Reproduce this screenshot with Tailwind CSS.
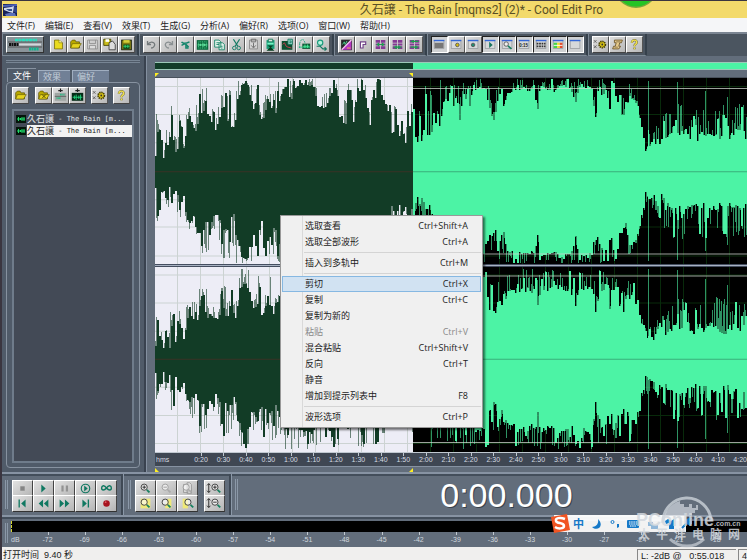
<!DOCTYPE html>
<html lang="zh-CN">
<head>
<meta charset="utf-8">
<title>久石譲 - The Rain [mqms2] (2)* - Cool Edit Pro</title>
<script src="https://cdn.jsdelivr.net/npm/@tailwindcss/browser@4"></script>
</head>
<body class="h-screen overflow-hidden bg-[#3b3640] font-['Open_Sans','Noto_Sans_CJK_SC',sans-serif] text-[9px] text-[#222]">
<div class="relative flex h-full flex-col overflow-hidden pt-px pl-[2px]">

  <header class="relative flex h-[17px] shrink-0 items-center overflow-hidden bg-[#f3da6b]">
    <svg class="ml-px h-3 w-3.5" viewBox="0 0 14 12"><rect width="14" height="12" fill="#182257"/><path d="M0 1L14 0V2L0 3Z" fill="#4c62b8"/><path d="M1 4L8 3L11 2L10 9L6 8L1 6Z" fill="#cfd9ee"/><path d="M3 5H9V7H6Z" fill="#33508c"/><path d="M2 10L6 9H12L13 12H3Z" fill="#5a70ba"/><path d="M11 2L14 3V9L11 8Z" fill="#2f448c"/></svg>
    <h1 class="ml-[46%] font-[Roboto,'Noto_Sans_CJK_SC',sans-serif] text-xs whitespace-nowrap text-[#594f25]">久石譲 - The Rain [mqms2] (2)* - Cool Edit Pro</h1>
    <svg class="absolute top-0 left-[616px] h-[7px] w-9" viewBox="0 0 36 7"><circle cx="18" cy="-15" r="22" fill="#7aa83a"/><circle cx="18" cy="-15.500" r="21" fill="#25c425"/></svg>
  </header>

  <nav id="menubar" class="flex h-[14px] shrink-0 items-center gap-[10px] bg-[#f5f6f8] pl-[5px] whitespace-nowrap"></nav>

  <div id="toolbar" class="flex h-6 shrink-0 border-t-2 border-[#7b8592] bg-[#4b5560]"></div>

  <main class="flex min-h-0 flex-1 bg-[#626d7b]">
    <aside class="flex w-[144px] shrink-0 flex-col border-r-2 border-[#39424f] bg-[#505b69] px-1 pb-1">
      <div class="mt-1 h-[3px] shrink-0 border-y border-[#788594]"></div>
      <div class="mt-[5px] flex h-[14px] shrink-0 items-end gap-[2px] pl-px">
        <button class="h-[14px] w-[29px] border-t border-l border-[#8792a0] bg-[#505b69] text-[9px] leading-[13px] text-white">文件</button>
        <button class="h-3 w-8 border-t border-l border-[#a0aec0] bg-[#718096] text-left text-[9px] leading-3 text-[#c0cad5]"><span class="pl-1">效果</span></button>
        <button class="h-3 w-[37px] border-t border-l border-[#a0aec0] bg-[#718096] text-left text-[9px] leading-3 text-[#c0cad5]"><span class="pl-1">偏好</span></button>
      </div>
      <section class="flex min-h-0 flex-1 flex-col rounded-sm border border-[#8792a0] px-[5px] pt-1 pb-1">
        <div id="filetools" class="flex h-[18px] shrink-0"></div>
        <div class="mt-1 min-h-0 flex-1 border-2 border-[#6f7c8b] bg-[#434a56] pt-[2px] pl-[2px] font-['DejaVu_Sans_Mono','Noto_Sans_CJK_JP',monospace] text-[7px]">
          <ul id="files"></ul>
        </div>
      </section>
    </aside>

    <section class="flex min-w-0 flex-1 flex-col border-l border-[#8490a0] pl-2">
      <div class="mt-[6px] flex h-2 shrink-0 border-t border-b border-[#9cc8b8]">
        <div class="w-[43.5%] bg-[#123c28]"></div><div class="flex-1 bg-[#4cf3a5]"></div>
      </div>
      <div class="flex h-2 shrink-0 items-end border-b border-[#48515c]">
        <div class="flex w-[43.5%] justify-between"><svg class="h-1 w-1" viewBox="0 0 4 4"><path d="M0 0H4L0 4Z" fill="#ffee20"/></svg><svg class="h-1 w-1" viewBox="0 0 4 4"><path d="M0 0H4V4Z" fill="#ffee20"/></svg></div>
      </div>
      <svg id="wave" class="block min-h-0 w-full flex-1" viewBox="0 0 592 373" preserveAspectRatio="none" role="img" aria-label="波形"></svg>
      <div class="relative h-[14px] shrink-0 border-t border-[#c0c8d0] bg-[#3f4753]">
        <div id="ruler" class="flex h-full overflow-hidden font-['Liberation_Sans',sans-serif] text-[7px] leading-[13px] whitespace-nowrap text-[#d5dbe2]"></div>
      </div>
      <div class="flex h-[6px] shrink-0 items-start border-t border-[#8692a2] pt-px">
        <div class="flex w-[43.5%] justify-between"><svg class="h-1 w-1" viewBox="0 0 4 4"><path d="M0 0V4H4Z" fill="#ffee20"/></svg><svg class="h-1 w-1" viewBox="0 0 4 4"><path d="M4 0V4H0Z" fill="#ffee20"/></svg></div>
      </div>
    </section>
  </main>

  <section class="flex h-[45px] shrink-0 border-t-2 border-b-2 border-t-[#8793a3] border-b-[#8793a3] bg-[#626d7b]">
    <div class="flex border-r-2 border-[#3f4955] py-[6px] pr-1 pl-[3px] shadow-[inset_0_2px_0_#434e5b]">
      <div class="mr-1 w-[3px] border-x border-[#8b98a8]"></div>
      <div id="transport" class="grid grid-cols-5 grid-rows-2"></div>
    </div>
    <div class="flex border-r-2 border-l border-r-[#3f4955] border-l-[#8b98a8] py-[6px] pr-1 pl-1 shadow-[inset_0_2px_0_#434e5b]">
      <div class="mr-1 w-[3px] border-x border-[#8b98a8]"></div>
      <div id="zoomer" class="grid grid-cols-3 grid-rows-2"></div>
      <div id="vzoom" class="ml-[6px] grid grid-rows-2"></div>
    </div>
    <div class="flex min-w-0 flex-1 border-l border-[#8b98a8] py-[5px] pl-[3px] shadow-[inset_0_2px_0_#434e5b]">
      <div class="w-[3px] border-x border-[#8b98a8]"></div>
      <output class="ml-[39.5%] font-['Liberation_Sans',sans-serif] text-[34px] leading-[32px] text-white [text-shadow:1px_1px_0_#39424d]">0:00.000</output>
    </div>
  </section>

  <section class="flex h-[30px] shrink-0 border-t-2 border-[#434e5b] bg-[#626d7b] pl-[3px]">
    <div class="my-1 mr-[3px] w-[3px] border-x border-[#8b98a8]"></div>
    <div class="min-w-0 flex-1 pt-[2px]">
      <div class="h-[11px] border-l border-dashed border-[#d8d830] bg-black"></div>
      <div id="levels" class="flex font-['Liberation_Sans',sans-serif] text-[7px] leading-[10px] text-[#d0d7de]"></div>
    </div>
  </section>

  <footer class="flex h-[13px] shrink-0 items-start justify-between overflow-hidden bg-[#f0efee] pl-px font-['Liberation_Sans','Noto_Sans_CJK_SC',sans-serif] text-[9px] whitespace-pre">
    <span class="leading-[17px]">打开时间  9.40 秒</span>
    <span class="mt-[2px] flex gap-[2px] leading-3"><span class="w-[99px] border-t border-l border-[#888] pl-[3px]">L: -2dB @   0:55.018</span><span class="w-[9px] border-t border-l border-[#888] pl-[3px]">4</span></span>
  </footer>

  <div id="context" role="menu" class="absolute top-[215px] left-[280px] w-[203px] border border-[#999] bg-[#f0f0f0] bg-[linear-gradient(90deg,transparent_21px,#d9d9d9_21px,#d9d9d9_22px,transparent_22px)] px-px py-[2px] shadow-[2px_2px_2px_#0008]"></div>

  <div class="absolute top-[515px] left-[554px] flex h-[17px] w-[132px] items-center gap-[7px] bg-white/95 text-[#1679c8]">
    <svg class="-ml-1 h-5 w-5 shrink-0" viewBox="0 0 20 20"><path d="M1 3L17 0L20 16L4 19Z" fill="#f15422"/><path d="M15 5C10 3 5 4 6 7C7 10 14 8 14 12C14 15 8 15 5 13" fill="none" stroke="#fff" stroke-width="2.500"/></svg>
    <span class="-ml-1 text-[11px] leading-4 font-bold">中</span>
    <svg class="h-3 w-3 shrink-0" viewBox="0 0 12 12"><path d="M7 1C8 6 5 9 1 9C6 14 14 8 7 1Z" fill="#1679c8"/></svg>
    <svg class="h-3 w-2.5 shrink-0" viewBox="0 0 10 12"><circle cx="2.500" cy="4" r="1.500" fill="none" stroke="#1679c8"/><path d="M7 6H9V9L7 10Z" fill="#1679c8"/></svg>
    <svg class="h-3 w-3 shrink-0" viewBox="0 0 12 12"><rect y="2" width="12" height="8" rx="1" fill="#1679c8"/><path d="M2 4H10M2 6H10M3 8H9" stroke="#fff" stroke-dasharray="1.500 .700"/></svg>
    <svg class="h-3 w-3 shrink-0" viewBox="0 0 12 12"><path d="M2 4H7V7H12V11H5V8H2Z" fill="#91b7d9"/></svg>
    <svg class="h-3 w-3 shrink-0" viewBox="0 0 12 12"><path d="M0 3L3 1L6 3L9 1V11H4V5L1 6Z" fill="#1679c8"/></svg>
    <svg class="-ml-1 h-3 w-3 shrink-0" viewBox="0 0 12 12"><path d="M2 10L7 5M7 5C6 2 8 1 10 1L8 3L10 5L12 3C12 6 9 7 7 5" fill="none" stroke="#1679c8" stroke-width="2"/></svg>
  </div>

  <div class="pointer-events-none absolute top-[496px] left-[636px] h-[54px] w-[104px] font-['Liberation_Sans','Noto_Sans_CJK_SC',sans-serif] text-[#d3d8de]/85">
    <svg class="absolute top-0 left-6 h-[54px] w-[54px]" viewBox="0 0 54 54"><path d="M3 27A24 24 0 0 1 51 25" fill="none" stroke="#ccd2d9" stroke-opacity=".8" stroke-width="3"/><path d="M4 20C8 12 13 7 20 5V8H24V11H29V8H32V12H36V9H38V14H35V17H32V20H4Z" fill="#ccd2d9" fill-opacity=".75"/><path d="M10 43A24 24 0 0 0 44 43" fill="none" stroke="#ccd2d9" stroke-opacity=".7" stroke-width="3"/></svg>
    <div class="absolute top-[14px] left-0 flex items-baseline text-[18px] leading-5 font-bold">PConline<span class="text-[7px]">.com.cn</span></div>
    <div class="absolute top-[32px] left-[2px] flex w-[102px] justify-between text-[12px] leading-[14px] font-bold"><span>太</span><span>平</span><span>洋</span><span>电</span><span>脑</span><span>网</span></div>
  </div>
</div>

<script>
const $ = id => document.getElementById(id);

$('menubar').innerHTML = ['文件(F)','编辑(E)','查看(V)','效果(T)','生成(G)','分析(A)','偏好(R)','选项(O)','窗口(W)','帮助(H)']
  .map(t => `<button class="leading-[13px]">${t}</button>`).join('');

const folder = '<path d="M3 5L5 3H8L9 5H13V12H3Z" fill="#b8a800" stroke="#4d4500" stroke-width=".7"/><path d="M5 7H15L12 12H3Z" fill="#e5d31f" stroke="#5d5400" stroke-width=".7"/>';
const lens = (x, y, c = '#333') => `<circle cx="${x}" cy="${y}" r="3.500" fill="#ffffff99" stroke="${c}"/><path d="M${x+3} ${y+3}L${x+6} ${y+6}" stroke="#168060" stroke-width="2"/>`;
const win = inner => `<rect x="2.500" y="3.500" width="11" height="9" fill="#d6d8da" stroke="#8a8d92" stroke-width=".7"/><path d="M2 3.500H14" stroke="#3468d8" stroke-width="1.600"/>${inner}`;
const blocks = d => `<path d="M3 3H8V6H3ZM9 3H14V6H9ZM3 7H8V9H3ZM9 7H14V9H9ZM3 10H8V13H3ZM9 10H14V13H9Z" fill="#843994"/><path d="${d}" fill="none" stroke="#18a04c" stroke-width="1.400"/>`;
const gear = '<path d="M1 3L4 6M4 3L1 6M1 9L4 12M4 9L1 12" stroke="#444" stroke-width=".8"/><circle cx="10.500" cy="8" r="3.500" fill="#d4bf16" stroke="#464000" stroke-dasharray="1.500 .8" stroke-width="2"/><circle cx="10.500" cy="8" r="2.300" fill="#d4bf16"/><circle cx="10.500" cy="8" r="1" fill="#333"/>';
const help = '<path d="M5.500 6C5.500 2 11.500 2 11 6C10.500 8 8.500 7 8.500 10M8.500 11.500V13.500" fill="none" stroke="#6c6940" stroke-width="2.600"/><path d="M5.500 6C5.500 2 11.500 2 11 6C10.500 8 8.500 7 8.500 10M8.500 11.500V13.500" fill="none" stroke="#efdf4a" stroke-width="1.600"/>';
const icons = {
  new: '<path d="M4 3H9L13 6V13H4Z" fill="#eadb20" stroke="#6d6300" stroke-width=".8"/><path d="M9 3V6H13" fill="#fff8a0" stroke="#6d6300" stroke-width=".6"/>',
  open: folder,
  save: '<path d="M3 3H14V13H3ZM5 3V7H12V3M5 13V9H12V13" fill="#ddd" stroke="#8b8b8b"/>',
  saveas: '<path d="M2 2H10V9H2Z" fill="#cabd1b" stroke="#444400"/><path d="M4 2H8V5H4Z" fill="#fff"/><path d="M8 6L12 4L15 8V14H8Z" fill="#ddd" stroke="#333" stroke-width=".9"/>',
  saveall: '<rect x="3" y="3" width="11" height="11" fill="#817c12" stroke="#151d0c"/><path d="M5 3H12V6H5Z" fill="#d5cf39"/><path d="M5 8H12V13H5Z" fill="#0c4b20"/><path d="M5 10H12M7 8.500V12M10 8.500V12" stroke="#35d672"/>',
  undo: '<path d="M4 4V8H8M4 8C8 3 13 6 12 9C11 12 9 12 8 12" fill="none" stroke="#747a7c" stroke-width="1.500"/>',
  redo: '<path d="M13 4V8H9M13 8C9 3 4 6 5 9C6 12 8 12 9 12" fill="none" stroke="#8a9092" stroke-width="1.500"/>',
  repeat: '<path d="M4 5C6 8 11 6 13 5M8 7L4 9M8 7L12 11M9 8V12H12" fill="none" stroke="#15856c" stroke-width="1.700"/>',
  select: '<rect x="2" y="3" width="13" height="11" fill="#0b693d"/><path d="M4 5H13V12H4Z" fill="none" stroke="#59e29c" stroke-dasharray="1 1"/><path d="M3 8.500H14M6 7V10M9 6V11M11 7V10" stroke="#6ff7ad"/>',
  copy: '<path d="M3 3H8L10 5V11H3ZM8 6H12L14 8V14H8Z" fill="#e7f4ed" stroke="#178467"/><path d="M5 6H8M5 8H8M10 10H12M10 12H12" stroke="#178467"/>',
  cut: '<path d="M5 2L10 10M12 2L7 10" stroke="#157b64" stroke-width="1.400"/><circle cx="6" cy="12" r="2" fill="none" stroke="#157b64"/><circle cx="11" cy="12" r="2" fill="none" stroke="#157b64"/>',
  paste: '<path d="M4 3H13V13H4Z" fill="#d5d5d5" stroke="#888"/><path d="M6 2H11V5H6ZM8.500 6V11M6 9L8.500 12L11 9" fill="none" stroke="#666"/>',
  pastenew: '<path d="M4 3H13V13H4Z" fill="#179d76"/><path d="M6 2H11V5H6Z" fill="#d7e9df" stroke="#147154"/><path d="M5 6H12V8H5Z" fill="#78f1c3"/><path d="M5 9H12L9 11L13 15H4L8 11Z" fill="#063d20"/>',
  mix: '<path d="M2 4H14V14H2Z" fill="#0b5030"/><path d="M3 8L5 6L7 10L9 11L13 12" fill="none" stroke="#d03b50"/><path d="M9 2H14V8H9Z" fill="#9cddcc" stroke="#15735c"/><path d="M10.500 4H12.500V6H10.500" fill="none" stroke="#15735c"/>',
  crop: '<path d="M6 7H15V13H6Z" fill="#115b38"/><path d="M2 11H15" stroke="#28c983"/><path d="M7 10H14M9 8V12M12 8V12" stroke="#4bf29c"/><path d="M3 7C4 1 8 1 9 6M3 7V12" fill="none" stroke="#1da47c" stroke-dasharray="2 1"/>',
  convert: '<circle cx="7" cy="6" r="3" fill="#b4f2dc" stroke="#1a9b7c" stroke-width="1.300"/><path d="M3 10H7L10 13H14M12 11L14 13L12 15" fill="none" stroke="#13775f" stroke-width="1.300"/>',
  spectral: '<rect x="3" y="3" width="11" height="11" fill="#26262a" stroke="#242424"/><path d="M3 14L14 3V14Z" fill="#b834c4"/><path d="M3 14L14 3" stroke="#f4c1ef" stroke-width="1.500"/><path d="M4 8L6 5L7 8L9 4" fill="none" stroke="#4bd68c"/><path d="M9 12H13" stroke="#f0c03a"/>',
  cue: '<path d="M5 12V5H11V8H8V12Z" fill="#fff" stroke="#704288" stroke-width="1.300"/>',
  trackA: blocks('M4 8H13M6 6V10M11 6V10'), trackB: blocks('M4 11H13M7 9V13M10 9V13'), trackC: blocks('M4 4.500H13M4 11H13M7 3V6M10 9V13'),
  w1: win('<path d="M3 6H13V12H3Z" fill="#777"/>'), w2: win('<circle cx="9.500" cy="8.500" r="2" fill="#d7bd10" stroke="#555"/>'), w3: win('<circle cx="8" cy="8.500" r="2" fill="#218b70" stroke="#555"/>'), w4: win('<path d="M7 5L11 8.500L7 12Z" fill="#17735d"/>'),
  w5: win('<circle cx="7" cy="7.500" r="2.500" fill="#eee" stroke="#555"/><path d="M9 9.500L13 13" stroke="#168060" stroke-width="1.800"/>'), w6: win('<text x="2.500" y="11" font-family="Liberation Sans" font-weight="bold" font-size="5" fill="#222">0:15</text>'), w7: win('<path d="M3 7H13M3 10H13" stroke="#333" stroke-width="2" stroke-dasharray="2 .8"/>'),
  w8: win('<path d="M3 6H7V12H3Z" fill="#46d54a"/><path d="M7 6H10V12H7Z" fill="#eee12c"/><path d="M10 6H13V12H10Z" fill="#e44c2a"/><path d="M3 9H13" stroke="#fff"/>'), w9: win(''),
  gear, help,
  script: '<path d="M5 3H14L13 6H11L10 10H12L10 13H3L4 10H6L7 6H5Z" fill="#e6cb8c" stroke="#6e572a"/><path d="M7 5H12M5 11H9" stroke="#89744c"/>',
  close: folder + '<path d="M7 7L11 11M11 7L7 11" stroke="#4a4300"/>',
  insert: '<path d="M2 5H15V14H2Z" fill="#9fa6a3"/><path d="M8.500 0V4M6 2.500H11" stroke="#222" stroke-width="1.300"/><path d="M8 7H13M4 11H9" stroke="#24bd84" stroke-width="2" stroke-dasharray="1 .5"/><path d="M2 9H15" stroke="#333" stroke-width=".6"/>',
  edit: '<path d="M2 5H15V14H2Z" fill="#052b17"/><path d="M8.500 0V4M6 2.500H11" stroke="#222" stroke-width="1.300"/><path d="M3 10H14M5 8V12M7 7V13M10 8V12M12 7V13" stroke="#24da80"/>',
  stop: '<path d="M8 6H13V11H8Z" fill="#858585"/>', play: '<path d="M8 4L13 8.500L8 13Z" fill="#107861"/>',
  pause: '<path d="M7 5H9.500V12H7ZM12 5H14.500V12H12Z" fill="#929292"/>',
  playloop: '<circle cx="10.500" cy="8.500" r="4.800" fill="none" stroke="#107861" stroke-width="1.300"/><path d="M9 5L13 8.500L9 12Z" fill="#107861"/>',
  loop: '<path d="M10.500 8C8 4 5 5 5 8C5 11 8 11 10.500 8C13 4 16 5 16 8C16 11 13 11 10.500 8Z" fill="none" stroke="#107861" stroke-width="1.600"/>',
  start: '<path d="M6 4H7.500V13H6ZM14 4V13L9 8.500Z" fill="#107861"/>', rew: '<path d="M10 4V13L5 8.500ZM16 4V13L11 8.500Z" fill="#107861"/>',
  fwd: '<path d="M5 4V13L10 8.500ZM11 4V13L16 8.500Z" fill="#107861"/>', end: '<path d="M7 4V13L12 8.500ZM13 4H14.500V13H13Z" fill="#107861"/>',
  rec: '<circle cx="10.500" cy="8.500" r="3.700" fill="#a71420"/><circle cx="9.500" cy="7" r="1" fill="#df5960"/>',
  zin: lens(9,7) + '<path d="M7 7H11M9 5V9" stroke="#222"/>', zout: lens(9,7,'#999').replace('#168060','#aaa') + '<path d="M7 7H11" stroke="#999"/>',
  zfull: '<path d="M6 4H11V13H6ZM10 2H13L15 4V14H10Z" fill="#ddd" stroke="#999"/>' + lens(9,7,'#999').replace('#168060','#aaa'),
  zsel: '<path d="M5 3H16V14H5Z" fill="#efe978"/>' + lens(9,7), zleft: '<path d="M12 3H16V14H9V11Z" fill="#efe978"/>' + lens(9,7), zright: '<path d="M5 3H11V14H5Z" fill="#efe978"/>' + lens(11,7),
  vin: '<path d="M4 3V13M2 5L4 3L6 5M2 11L4 13L6 11" fill="none" stroke="#222"/>' + lens(11,7) + '<path d="M9 7H13M11 5V9" stroke="#222"/>',
  vout: '<path d="M4 3V13M2 5L4 3L6 5M2 11L4 13L6 11" fill="none" stroke="#222"/>' + lens(11,7) + '<path d="M9 7H13" stroke="#222"/>'
};
const small = n => `<button aria-label="${n}" class="h-[17px] w-[17px] shrink-0 border border-t-white border-r-[#555] border-b-[#444] border-l-white bg-linear-to-br from-[#dedede] to-[#b8b8b8]"><svg class="h-[15px] w-[15px]" viewBox="0 0 17 16">${icons[n]}</svg></button>`;
const sunk = n => `<button aria-label="${n}" class="h-[17px] w-[17px] shrink-0 border border-t-[#222] border-r-white border-b-white border-l-[#222] bg-[#cfd1d3]"><svg class="h-[15px] w-[15px]" viewBox="0 0 17 16">${icons[n]}</svg></button>`;
const large = n => `<button aria-label="${n}" class="h-[17px] w-[21px] border border-t-white border-r-[#444] border-b-[#333] border-l-white bg-linear-to-br from-[#e2e2e2] to-[#b5b5b5]"><svg class="h-[15px] w-[19px]" viewBox="0 0 21 17">${icons[n]}</svg></button>`;

const multi = `<button aria-label="多轨" class="mr-[6px] h-[17px] w-[38px] border border-t-white border-r-[#333] border-b-[#333] border-l-white bg-[#8b949a]"><svg class="h-[15px] w-9" viewBox="0 0 36 15"><path d="M1 5H35M1 10H35" stroke="#555"/><path d="M8 3H30" stroke="#28dfbd" stroke-width="2.500" stroke-dasharray="3 .5"/><path d="M2 7.500H12" stroke="#111" stroke-width="3" stroke-dasharray="2 .5"/><path d="M12 7.500H34" stroke="#d4d8db" stroke-width="2"/><path d="M22 12H32" stroke="#10b38d" stroke-width="3" stroke-dasharray="2 .5"/></svg></button>`;
const groups = [
  [multi, ...['new','open','save','saveas','saveall'].map(small)],
  ['undo','redo','repeat','select','copy','cut','paste','pastenew','mix','crop','convert'].map(small),
  ['spectral','cue','trackA','trackB','trackC'].map(small),
  ['w1','w2','w3','w4','w5','w6','w7','w8','w9'].map((n, i) => i === 1 || i === 2 ? small(n) : sunk(n)),
  ['gear','script','help'].map(small)
];
$('toolbar').innerHTML = groups.map(g => `<div class="flex items-start border-r-2 border-b border-l border-r-[#35404b] border-b-[#7b8794] border-l-[#7b8794] pt-[2px] pr-[2px] pl-[3px]">${g.join('')}</div>`).join('');
$('filetools').innerHTML = small('open') + '<span class="w-[6px]"></span>' + small('close') + small('insert') + small('edit') + '<span class="w-[5px]"></span>' + small('gear') + '<span class="w-[5px]"></span>' + small('help');
$('transport').innerHTML = ['stop','play','pause','playloop','loop','start','rew','fwd','end','rec'].map(large).join('');
$('zoomer').innerHTML = ['zin','zout','zfull','zsel','zleft','zright'].map(large).join('');
$('vzoom').innerHTML = ['vin','vout'].map(large).join('');

const fileIcon = '<svg class="h-2.5 w-2.5 shrink-0" viewBox="0 0 10 10"><rect y="1" width="10" height="8" fill="#04150a"/><path d="M1 5H9M2.500 3V7M4.500 4V6M6 3V7M8 3V7" stroke="#21db6a"/></svg>';
$('files').innerHTML = ['text-[#e2e6ea]', 'bg-[#f2f2f2] text-[#222]']
  .map(c => `<li class="flex h-3 items-center gap-px whitespace-pre">${fileIcon}<span class="${c} flex h-3 flex-1 items-center leading-3"><span class="text-[9px]">久石譲</span> - The Rain [m...</span></li>`).join('');

const times = [];
for (let s = 20; s <= 250; s += 10) times.push(Math.floor(s / 60) + ':' + String(s % 60).padStart(2, '0'));
$('ruler').innerHTML = '<span class="min-w-0 flex-[1.5] pl-px">hms</span>' +
  times.map(t => `<span class="relative min-w-0 flex-1 text-center before:absolute before:top-0 before:left-1/2 before:h-[3px] before:w-px before:bg-[#c0c8d0]">${t}</span>`).join('') +
  '<span class="min-w-0 flex-[.6] overflow-hidden pl-1">4:20</span>';

let lv = '<span class="relative w-[18px] shrink-0 pt-[3px]">dB</span>';
for (let d = -72; d <= -18; d += 3) lv += `<span class="relative min-w-0 flex-1 pt-[3px] text-center before:absolute before:top-0 before:left-1/2 before:h-[3px] before:w-px before:bg-[#c0c8d0]">${d}</span>`;
$('levels').innerHTML = lv + '<span class="w-[13px] shrink-0"></span>';

const sep = '<div role="separator" class="my-[2px] ml-[22px] h-px bg-[#d4d4d4]"></div>';
$('context').innerHTML = [['选取查看','Ctrl+Shift+A'],['选取全部波形','Ctrl+A'],0,['插入到多轨中','Ctrl+M'],0,['剪切','Ctrl+X'],['复制','Ctrl+C'],['复制为新的',''],['粘贴','Ctrl+V'],['混合粘贴','Ctrl+Shift+V'],['反向','Ctrl+T'],['静音',''],['增加到提示列表中','F8'],0,['波形选项','Ctrl+P']]
  .map(m => !m ? sep : `<button role="menuitem" class="flex h-4 w-full items-center justify-between border pr-3 pl-[22px] leading-[14px] ${m[0] === '剪切' ? 'border-[#86b8e2] bg-[#d1e2f2]' : 'border-transparent'} ${m[0] === '粘贴' ? 'text-[#8a8a8a]' : ''}"><span>${m[0]}</span><span>${m[1]}</span></button>`).join('');

// Waveform envelope: [x, inner edge, outer edge] measured down from the top of a track
const env = [[0,78,55],[1,50,36],[3,62,45],[8,80,72],[11,62,48],[14,80,50],[16,62,28],[19,78,45],[21,80,55],[24,56,35],[29,76,60],[31,44,32],[34,44,28],[37,48,20],[40,58,30],[44,38,5],[48,40,12],[52,44,8],[57,46,30],[61,54,40],[67,35,2],[72,44,6],[79,54,0],[82,28,0],[86,8,0],[91,4,0],[97,33,3],[102,30,6],[107,48,12],[112,24,5],[118,44,10],[125,20,0],[130,10,0],[134,30,0],[139,12,0],[150,8,0],[157,8,0],[163,34,6],[170,34,12],[175,18,0],[182,22,0],[184,46,8],[190,48,20],[192,12,2],[196,22,10],[199,56,20],[202,12,0],[208,18,0],[211,24,6],[215,58,40],[217,24,0],[225,14,0],[229,28,14],[234,42,18],[237,72,34],[239,42,20],[243,66,36],[246,48,24],[250,66,34],[252,36,20],[256,60,16],[257,60,15],[261,72,34],[264,67,26],[267,70,8],[270,68,5],[276,58,2],[285,62,0],[288,24,0],[293,26,0],[296,42,8],[301,22,2],[304,50,10],[307,18,0],[314,34,0],[318,12,0],[328,12,0],[333,32,5],[339,46,20],[342,24,2],[348,34,8],[352,16,0],[365,12,0],[378,14,0],[382,32,2],[385,10,0],[399,14,0],[404,8,0],[415,12,0],[420,30,2],[423,10,0],[436,12,0],[440,44,12],[444,20,0],[450,16,0],[455,44,2],[458,14,0],[464,33,14],[470,44,20],[474,22,6],[478,22,12],[482,30,20],[486,52,42],[490,74,56],[495,68,48],[499,76,54],[501,58,48],[506,76,40],[511,64,34],[515,63,34],[518,54,24],[522,60,18],[530,56,28],[536,66,38],[545,62,28],[550,64,24],[553,56,40],[561,62,20],[570,67,24],[575,60,28],[582,61,25],[592,62,28]];
let seed = 73;
const rnd = () => (seed = (seed * 16807) % 2147483647) / 2147483647;
const at = x => { let i = 0; while (i < env.length - 2 && env[i + 1][0] <= x) i++; const a = env[i], b = env[i + 1], t = Math.min(1, (x - a[0]) / (b[0] - a[0])); return [93 - a[1] - (b[1] - a[1]) * t, 93 - a[2] - (b[2] - a[2]) * t]; };
const spikes = { 493: 90, 522: 89, 550: 80, 572: 74 };
function column(x, second) {
  let [lo, hi] = at(x);
  if (second) { lo = lo * .82; hi = (x > 80 && x < 480) ? hi * .97 : hi * .87; }
  const r = rnd();
  const level = lo + (hi - lo) * (r > .6 ? rnd() : r * .45);
  let tip = rnd() > .62 ? level + (hi - level) * rnd() : level;
  if (spikes[x]) tip = spikes[x];
  return [Math.min(92, level), Math.min(92, tip)];
}
let solid = ['', ''], thin = ['', ''];
for (const [c, second] of [[93, false], [280, true]]) {
  let last = [0, 0];
  for (let x = 0; x < 592; x++) {
    const side = x < 258 ? 0 : 1;
    let up = column(x, second), down = column(x, second);
    if (x % 2 && !spikes[x]) { up[0] = last[0]; down[0] = last[1]; }
    last = [up[0], down[0]];
    solid[side] += `M${x} ${Math.round(c - up[0])}h1V${Math.round(c + down[0])}h-1Z`;
    thin[side] += `M${x} ${Math.round(c - up[1])}h1V${Math.round(c + down[1])}h-1Z`;
  }
}
let gridL = '', gridR = '';
for (let x = 22; x < 592; x += 23) x < 258 ? gridL += `M${x}.5 0V373` : gridR += `M${x}.5 0V373`;
for (const y of [8, 36, 64, 121, 148, 177, 196, 224, 252, 308, 336, 364]) { gridL += `M0 ${y}.5H258`; gridR += `M258 ${y}.5H592`; }
$('wave').innerHTML = `
<rect width="258" height="373" fill="#ededf6"/><rect x="258" width="334" height="373" fill="#000"/>
<path d="${gridL}" stroke="#ccd3d2" fill="none"/><path d="${gridR}" stroke="#082a0b" fill="none"/>
<g shape-rendering="crispEdges"><path d="${thin[0]}" fill="#123c26" fill-opacity=".6"/><path d="${thin[1]}" fill="#4cf3a5" fill-opacity=".6"/>
<path d="${solid[0]}" fill="#123c26"/><path d="${solid[1]}" fill="#4cf3a5"/></g>
<path d="M258 10.500H592M258 175.500H592M258 197.500H592M258 363.500H592" stroke="#d0d8d0" stroke-opacity=".75"/>
<path d="M0 93.500H258M0 280.500H258" stroke="#4a2d25" stroke-opacity=".7"/><path d="M258 93.500H592M258 280.500H592" stroke="#39b07b"/>
<path d="M0 187H592" stroke="#454e60" stroke-width="3"/><path d="M0 187H592" stroke="#a8b2c2"/>`;
</script>
</body>
</html>
